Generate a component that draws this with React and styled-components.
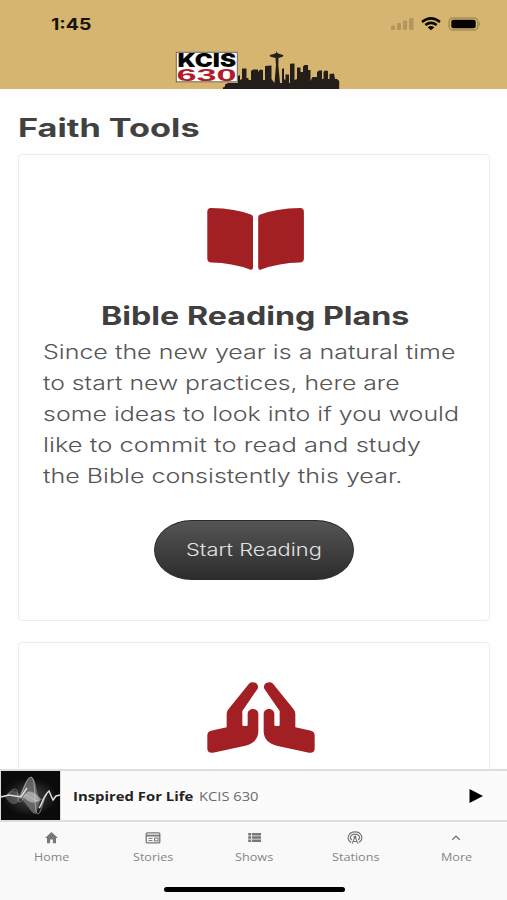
import React, { useLayoutEffect, useRef, useState } from "react";
import styled, { createGlobalStyle } from "styled-components";

const GlobalStyle = createGlobalStyle`
  * {
    box-sizing: border-box;
  }

  body {
    margin: 0;
    background: #fff;
    font-family: Inter, "Liberation Sans", sans-serif;
  }
`;

const Screen = styled.div`
  display: flex;
  flex-direction: column;
  width: 507px;
  height: 900px;
  overflow: hidden;
  background: #fefefe;
`;

const Header = styled.header`
  flex: none;
  height: 89px;
  background: #d6b570;
`;

const StatusBar = styled.div`
  display: flex;
  justify-content: space-between;
  align-items: center;
  height: 47px;
  padding: 0 25px 0 51px;
`;

const Clock = styled.div`
  color: #17120a;
  font-size: 16px;
  font-weight: 650;
  line-height: 20px;
`;

const LogoRow = styled.div`
  display: flex;
  padding-left: 175px;

  svg {
    display: block;
  }
`;

const Content = styled.main`
  flex: 1;
  min-height: 0;
  overflow: hidden;
  padding: 23px 17px 0 18px;
`;

const PageTitle = styled.h1`
  margin: 0 0 10px;
  color: #414141;
  font-size: 25px;
  font-weight: 700;
  line-height: 32px;
`;

const Card = styled.section`
  display: flex;
  flex-direction: column;
  align-items: center;
  height: 467px;
  margin-bottom: 21px;
  padding: ${(props) => props.$top}px 22px 0 24px;
  border: 1px solid #ececec;
  border-radius: 4px;
  background: #fff;

  svg {
    display: block;
    flex: none;
  }
`;

const CardTitle = styled.h2`
  margin: 29px 0 5px;
  color: #3f3f3f;
  font-size: 25px;
  font-weight: 700;
  line-height: 32px;
`;

const CardText = styled.p`
  align-self: stretch;
  margin: 0;
  color: #555;
  font-size: 19.5px;
  font-weight: 350;
  line-height: 31px;
`;

const PillButton = styled.button`
  display: flex;
  justify-content: center;
  align-items: center;
  width: 200px;
  height: 60px;
  margin: 28px 2px 0 0;
  padding: 0;
  border: 1px solid #2a2a2a;
  border-radius: 38px / 30px;
  background: linear-gradient(#555, #2c2c2c);
  color: #e2e2e2;
  font-family: inherit;
  font-size: 17px;
  font-weight: 350;
  line-height: 24px;
`;

const Player = styled.div`
  flex: none;
  display: flex;
  align-items: center;
  height: 53px;
  padding-right: 24px;
  border-top: 2px solid #dedede;
  border-bottom: 2px solid #dedede;
  background: #fbfbfb;
  font-family: "Open Sans", "Noto Sans", sans-serif;
  font-size: 13px;
  line-height: 20px;
`;

const Artwork = styled.svg`
  display: block;
  flex: none;
  margin-right: 12px;
`;

const TrackTitle = styled.div`
  margin-right: 6px;
  color: #222;
  font-weight: 700;
`;

const StationName = styled.div`
  flex: 1;
  color: #6a6a6a;
`;

const TabBar = styled.nav`
  flex: none;
  display: flex;
  height: 65px;
  padding: 9px 0 0 1px;
  background: #f9f9f9;
`;

const Tab = styled.div`
  flex: 1;
  display: flex;
  flex-direction: column;
  align-items: center;
  color: #858585;
  font-family: "Open Sans", "Noto Sans", sans-serif;
  font-size: 11px;
  line-height: 16px;

  svg {
    display: block;
    margin-bottom: 4px;
  }
`;

const HomeIndicator = styled.div`
  flex: none;
  height: 13px;
  padding-left: 1px;
  background: #f9f9f9;

  &::before {
    content: "";
    display: block;
    width: 181px;
    height: 5px;
    margin: 0 auto;
    border-radius: 3px;
    background: #000;
  }
`;

const FitBox = styled.span`
  display: block;
  width: ${(props) => props.$width}px;
  text-align: left;
  white-space: nowrap;
`;

const FitText = styled.span`
  display: inline-block;
  vertical-align: top;
  transform-origin: 0 50%;
`;

// Widens a line of text so that it spans the given width
const Fit = ({ width, children }) => {
  const ref = useRef(null);
  const [scale, setScale] = useState(1);

  useLayoutEffect(() => {
    setScale(width / ref.current.offsetWidth);
  }, [width]);

  return (
    <FitBox $width={width}>
      <FitText ref={ref} style={{ transform: `scaleX(${scale})` }}>
        {children}
      </FitText>
    </FitBox>
  );
};

const StatusIcons = () => (
  <svg width="92" height="18" viewBox="390 14.500 92 18">
    <g fill="#b2975c">
      <rect x="391" y="25" width="4" height="4.5" rx="1.3" />
      <rect x="397" y="22.5" width="4" height="7" rx="1.3" />
      <rect x="403" y="20" width="4" height="9.5" rx="1.3" />
      <rect x="409" y="17.5" width="4.5" height="12" rx="1.3" />
    </g>
    <g fill="none" stroke="#0b0905" strokeWidth="2.5">
      <path d="M422 21.4Q431 14.4 440 21.4" />
      <path d="M425.3 24.6Q431 20.2 436.7 24.6" />
    </g>
    <path d="M427.6 26.7Q431 24.3 434.4 26.7L431 29.8Z" fill="#0b0905" />
    <rect x="449.2" y="17.5" width="28.6" height="12" rx="3.6" fill="none" stroke="#a58c58" strokeWidth="1.5" />
    <rect x="451.3" y="19.3" width="24.4" height="8.4" rx="2" fill="#050402" />
    <path d="M479.2 21.6Q481.6 23.5 479.2 25.4Z" fill="#a07c48" />
  </svg>
);

const Logo = () => (
  <svg width="166" height="42" viewBox="175 47 166 42">
    <path
      fill="#241e1b"
      d="M223 89V87.5L225 86.5V84.5L228 83H238V76L240 75V80L242 79V68.5H246.5V78H248.5V80H251V71L253 69.5H258V72L260 69.5L263 70V80H265V66L271.5 65.5V79L274.5 83L276 65L275.5 58L270 56.5L269.8 55L274 54L276.2 52.7L276.5 50.5L277 52.7L279.5 54L283.3 55L283 56.5L278.5 58L278.3 65L280 83H282V69L284 68V79L285.5 80V74.5H289V83H290V63.8L294.5 63.4V80L297 79V67.500H300.5V72H303V66.5L304.5 65H308V70H310.5V81L312.5 77H317V72L319 70.5H322V79H323.5V72L325 70.5L328 71V79H329.5V74L334 73.5L335 79H337L339.2 81V89Z"
    />
    <rect x="176.3" y="52.3" width="61" height="29.5" fill="#fff" stroke="#6f6759" strokeWidth="1" />
    <text x="177.5" y="67.4" fill="#050505" fontFamily="Inter" fontSize="18.5" fontWeight="900" textLength="58.5" lengthAdjust="spacingAndGlyphs">
      KCIS
    </text>
    <text x="176.5" y="80.5" fill="#b01c2b" fontFamily="Liberation Sans" fontSize="16" fontWeight="700" textLength="60" lengthAdjust="spacingAndGlyphs">
      630
    </text>
  </svg>
);

const BookIcon = () => (
  <svg width="97" height="63" viewBox="207 208 97 63" fill="#a21f24">
    <path d="M211 208Q236 208.5 251.5 214.8Q253 215.5 253 217.5V267.5Q253 270.3 250 269.5Q232 262.8 211.5 262.5Q207.3 262.5 207.3 258.5V212Q207.3 208 211 208Z" />
    <path d="M300.2 208Q275.2 208.5 259.7 214.8Q258.2 215.5 258.2 217.5V267.5Q258.2 270.3 261.2 269.5Q279.2 262.8 299.7 262.5Q303.9 262.5 303.9 258.5V212Q303.9 208 300.2 208Z" />
  </svg>
);

const HAND =
  "M162 41C174 30 194 41 188 56L142 123V164Q142 168 146 168H154Q158 168 158 164V131C159 112 189 112 190 131V184C190 207 174 222 151 227L54 248C44 250 37 245 37 236V196C37 188 41 184 48 182L95 172V132Q95 124 99 119Z";

const HandsIcon = () => (
  <svg width="110" height="74" viewBox="15 30 330 222" fill="#a21f24" overflow="visible">
    <path d={HAND} />
    <path d={HAND} transform="translate(396 0) scale(-1 1)" />
  </svg>
);

const WaveArtwork = () => (
  <Artwork width="61" height="49" viewBox="0 0 61 49">
    <defs>
      <radialGradient id="glow">
        <stop offset="0" stopColor="#6a6a6a" />
        <stop offset="1" stopColor="#0b0b0b" />
      </radialGradient>
    </defs>
    <rect width="61" height="49" fill="#dcdcdc" />
    <rect x="1" width="59" height="49" fill="#0b0b0b" />
    <ellipse cx="30" cy="26" rx="27" ry="19" fill="url(#glow)" opacity="0.65" />
    <path d="M19 26C22 19 26 7 31 6C37 7 36 23 40 30L36 43C31 43 27 32 19 26Z" fill="#8d8d8d" opacity="0.6" />
    <path d="M23 26Q29 14 41 28Q34 36 23 26Z" fill="#ddd" opacity="0.5" />
    <path d="M5 26Q14 12 21 27Q14 40 5 26Z" fill="#aaa" opacity="0.35" />
    <g fill="none" stroke="#dcdcdc">
      <path d="M20 25C24 20 26 7 31 6C37 7 33 43 38 43C42 41 42 30 48 21" strokeWidth="0.7" opacity="0.75" />
      <path d="M1 25C9 27 10 18 15 18C20 19 16 31 20 31C24 30 23 22 28 25S38 34 47 24" strokeWidth="0.7" opacity="0.5" />
      <path d="M39 37C42 34 43 25 49 20L53 29L56 25L60 24M1 26L9 24L21 26L27 17" strokeWidth="1.5" />
    </g>
  </Artwork>
);

const HomeIcon = () => (
  <svg width="15" height="14" viewBox="0 0 15 14">
    <path fill="#777" d="M7.5 1L14 7H12V12.3H8.9V8.4H6.1V12.3H3V7H1Z" />
  </svg>
);

const StoriesIcon = () => (
  <svg width="16" height="14" viewBox="0 0 16 14" fill="none" stroke="#777">
    <rect x="1.2" y="1.9" width="13.6" height="10" rx="1.2" strokeWidth="1.3" />
    <path d="M1 4.6H15" strokeWidth="1.8" />
    <path d="M3.5 7.4H7.5M3.5 9.6H7.5" />
    <rect x="9.5" y="7.1" width="3.6" height="2.8" />
  </svg>
);

const ShowsIcon = () => (
  <svg width="15" height="14" viewBox="0 0 15 14" stroke="#777" strokeWidth="2.5">
    <path d="M1.200 3.2H4.2M5 3.2H14M1.200 6.5H4.2M5 6.5H14M1.200 9.8H4.2M5 9.8H14" />
  </svg>
);

const StationsIcon = () => (
  <svg width="16" height="14" viewBox="0 0 16 14" fill="none" stroke="#777" strokeWidth="1.1">
    <path d="M4.2 11.5C-1.3 8.3 1.2 .9 8 .9S17.3 8.3 11.8 11.5" />
    <path d="M4.8 9C1.6 6.3 4.2 3.1 8 3.1S14.4 6.3 11.2 9" />
    <circle cx="8" cy="6.1" r="1.5" fill="#777" stroke="none" />
    <path d="M5.2 12.6L7.4 7H8.6L10.8 12.6M6.3 10.5H9.7" />
  </svg>
);

const MoreIcon = () => (
  <svg width="14" height="14" viewBox="0 0 14 14" fill="none" stroke="#777" strokeWidth="1.3">
    <path d="M3.2 8.7L7 5.2L10.8 8.7" />
  </svg>
);

const paragraph = [
  { text: "Since the new year is a natural time", width: 412 },
  { text: "to start new practices, here are", width: 357 },
  { text: "some ideas to look into if you would", width: 416 },
  { text: "like to commit to read and study", width: 378 },
  { text: "the Bible consistently this year.", width: 360 },
];

const tabs = [
  { label: "Home", width: 35, Icon: HomeIcon },
  { label: "Stories", width: 40, Icon: StoriesIcon },
  { label: "Shows", width: 38, Icon: ShowsIcon },
  { label: "Stations", width: 47, Icon: StationsIcon },
  { label: "More", width: 31, Icon: MoreIcon },
];

const App = () => {
  return (
    <Screen>
      <GlobalStyle />
      <Header>
        <StatusBar>
          <Clock>
            <Fit width={40}>1:45</Fit>
          </Clock>
          <StatusIcons />
        </StatusBar>
        <LogoRow>
          <Logo />
        </LogoRow>
      </Header>

      <Content>
        <PageTitle>
          <Fit width={181}>Faith Tools</Fit>
        </PageTitle>
        <Card $top={53}>
          <BookIcon />
          <CardTitle>
            <Fit width={308}>Bible Reading Plans</Fit>
          </CardTitle>
          <CardText>
            {paragraph.map((line) => (
              <Fit key={line.text} width={line.width}>
                {line.text}
              </Fit>
            ))}
          </CardText>
          <PillButton>
            <Fit width={136}>Start Reading</Fit>
          </PillButton>
        </Card>
        <Card $top={37}>
          <HandsIcon />
        </Card>
      </Content>

      <Player>
        <WaveArtwork />
        <TrackTitle>
          <Fit width={120}>Inspired For Life</Fit>
        </TrackTitle>
        <StationName>
          <Fit width={60}>KCIS 630</Fit>
        </StationName>
        <svg width="14" height="14" viewBox="0 0 14 14">
          <path d="M0.5 0L14 7L0.5 14Z" />
        </svg>
      </Player>

      <TabBar>
        {tabs.map(({ label, width, Icon }) => (
          <Tab key={label}>
            <Icon />
            <Fit width={width}>{label}</Fit>
          </Tab>
        ))}
      </TabBar>
      <HomeIndicator />
    </Screen>
  );
};

export default App;
